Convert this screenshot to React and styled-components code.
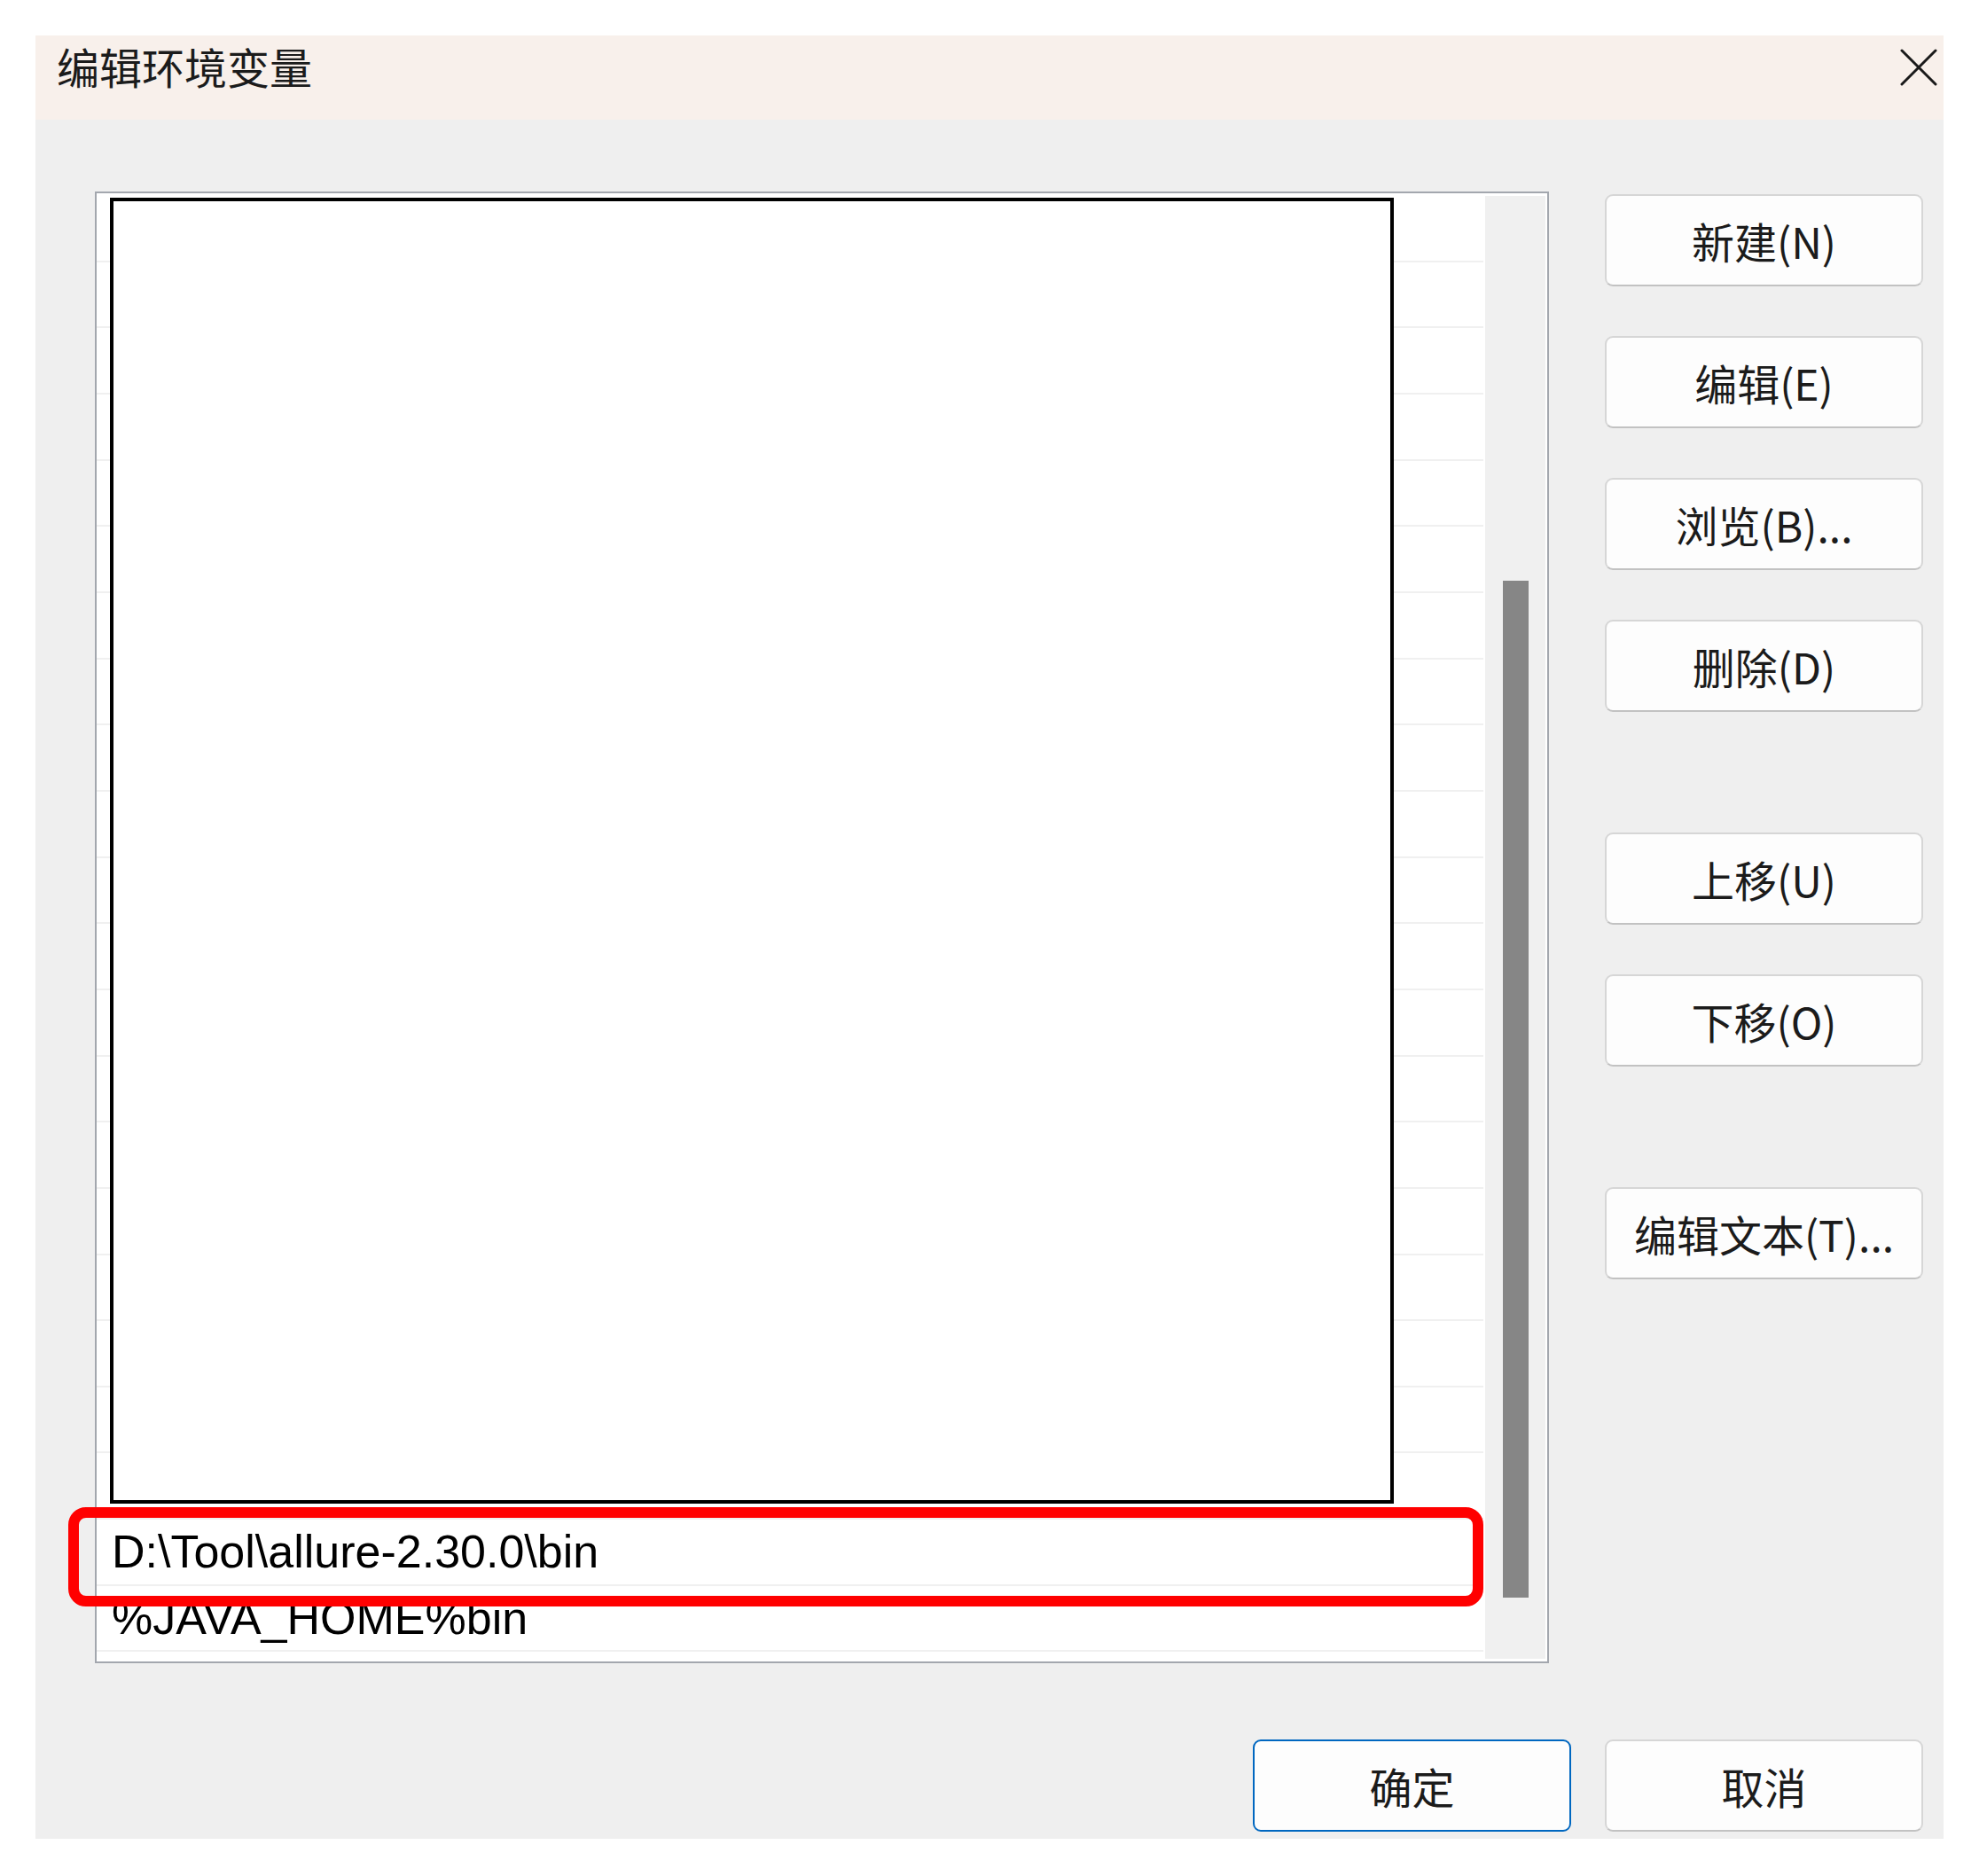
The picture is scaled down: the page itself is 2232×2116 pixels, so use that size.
import React from "react";
import styled, { createGlobalStyle } from "styled-components";

// Global Styles
const GlobalStyle = createGlobalStyle`
  * {
    margin: 0;
    padding: 0;
    box-sizing: border-box;
  }

  body {
    margin: 0;
    background: #ffffff;
    font-family: "Noto Sans CJK SC", "Liberation Sans", sans-serif;
    color: #1b1b1b;
  }
`;

const Page = styled.div`
  padding: 40px;
`;

const Dialog = styled.div`
  position: relative;
  width: 2152px;
  background: #efefef;
`;

const TitleBar = styled.div`
  height: 95px;
  display: flex;
  justify-content: space-between;
  align-items: flex-start;
  background: #f8f0eb;
  padding: 0 7px 0 24px;
`;

const Title = styled.h1`
  margin-top: 8px;
  font-size: 48px;
  line-height: 52px;
  font-weight: 400;
  color: #1b1b1b;
`;

const CloseIcon = styled.svg`
  margin-top: 15px;
  width: 42px;
  height: 42px;
`;

const Body = styled.div`
  display: grid;
  grid-template-columns: 1640px 359px;
  column-gap: 63px;
  padding: 81px 23px 8px 67px;
`;

const ListBox = styled.div`
  position: relative;
  height: 1660px;
  display: flex;
  background: #ffffff;
  border: 2px solid #a3a7ae;
`;

const Rows = styled.div`
  flex: 1;
  overflow: hidden;
  padding-top: 3px;
`;

const Row = styled.div`
  height: 74.67px;
  display: flex;
  align-items: center;
  padding-left: 17px;
  border-bottom: 2px solid #f0f0f0;
  font-family: "Liberation Sans", "Noto Sans CJK SC", sans-serif;
  font-size: 52px;
  color: #000;
  white-space: nowrap;
`;

const ScrollTrack = styled.div`
  width: 68px;
  margin: 3px 2px 3px 2px;
  background: #f0f0f0;
  display: flex;
  justify-content: center;
`;

const Thumb = styled.div`
  width: 29px;
  height: 1147px;
  margin-top: 434px;
  background: #868686;
`;

const Redaction = styled.div`
  position: absolute;
  left: 15px;
  top: 5px;
  width: 1448px;
  height: 1473px;
  background: #ffffff;
  border: 4px solid #000000;
`;

const ButtonColumn = styled.div`
  display: flex;
  flex-direction: column;
  padding-top: 3px;
`;

const Button = styled.button`
  width: 359px;
  height: 104px;
  margin-top: ${(props) => props.$space || 0}px;
  background: #fdfdfd;
  border: 2px solid ${(props) => (props.$primary ? "#0067c0" : "#d6d6d6")};
  border-bottom-color: ${(props) => (props.$primary ? "#0067c0" : "#c2c2c2")};
  border-radius: 9px;
  font-family: "Noto Sans CJK SC", "Liberation Sans", sans-serif;
  font-size: 48px;
  color: #1b1b1b;
  display: flex;
  align-items: center;
  justify-content: center;
`;

const Footer = styled.div`
  grid-column: 1 / -1;
  display: flex;
  justify-content: flex-end;
  gap: 38px;
  margin-top: 86px;
`;

const Highlight = styled.div`
  position: absolute;
  left: 37px;
  top: 1660px;
  width: 1596px;
  height: 112px;
  border: 12px solid #ff0000;
  border-radius: 20px;
`;

const sideButtons = [
  { label: "新建(N)", space: 0 },
  { label: "编辑(E)", space: 56 },
  { label: "浏览(B)...", space: 56 },
  { label: "删除(D)", space: 56 },
  { label: "上移(U)", space: 136 },
  { label: "下移(O)", space: 56 },
  { label: "编辑文本(T)...", space: 136 },
];

const rows = [
  ...Array(20).fill(""),
  "D:\\Tool\\allure-2.30.0\\bin",
  "%JAVA_HOME%bin",
  "",
];

const App = () => {
  return (
    <>
      <GlobalStyle />
      <Page>
        <Dialog>
          <TitleBar>
            <Title>编辑环境变量</Title>
            <CloseIcon viewBox="0 0 42 42">
              <path d="M2 2 L40 40 M40 2 L2 40" stroke="#1a1a1a" strokeWidth="3" strokeLinecap="round" />
            </CloseIcon>
          </TitleBar>
          <Body>
            <ListBox>
              <Rows>
                {rows.map((text, i) => (
                  <Row key={i}>{text}</Row>
                ))}
              </Rows>
              <ScrollTrack>
                <Thumb />
              </ScrollTrack>
              <Redaction />
            </ListBox>
            <ButtonColumn>
              {sideButtons.map((b) => (
                <Button key={b.label} $space={b.space}>
                  {b.label}
                </Button>
              ))}
            </ButtonColumn>
            <Footer>
              <Button $primary>确定</Button>
              <Button>取消</Button>
            </Footer>
          </Body>
          <Highlight />
        </Dialog>
      </Page>
    </>
  );
};

export default App;
